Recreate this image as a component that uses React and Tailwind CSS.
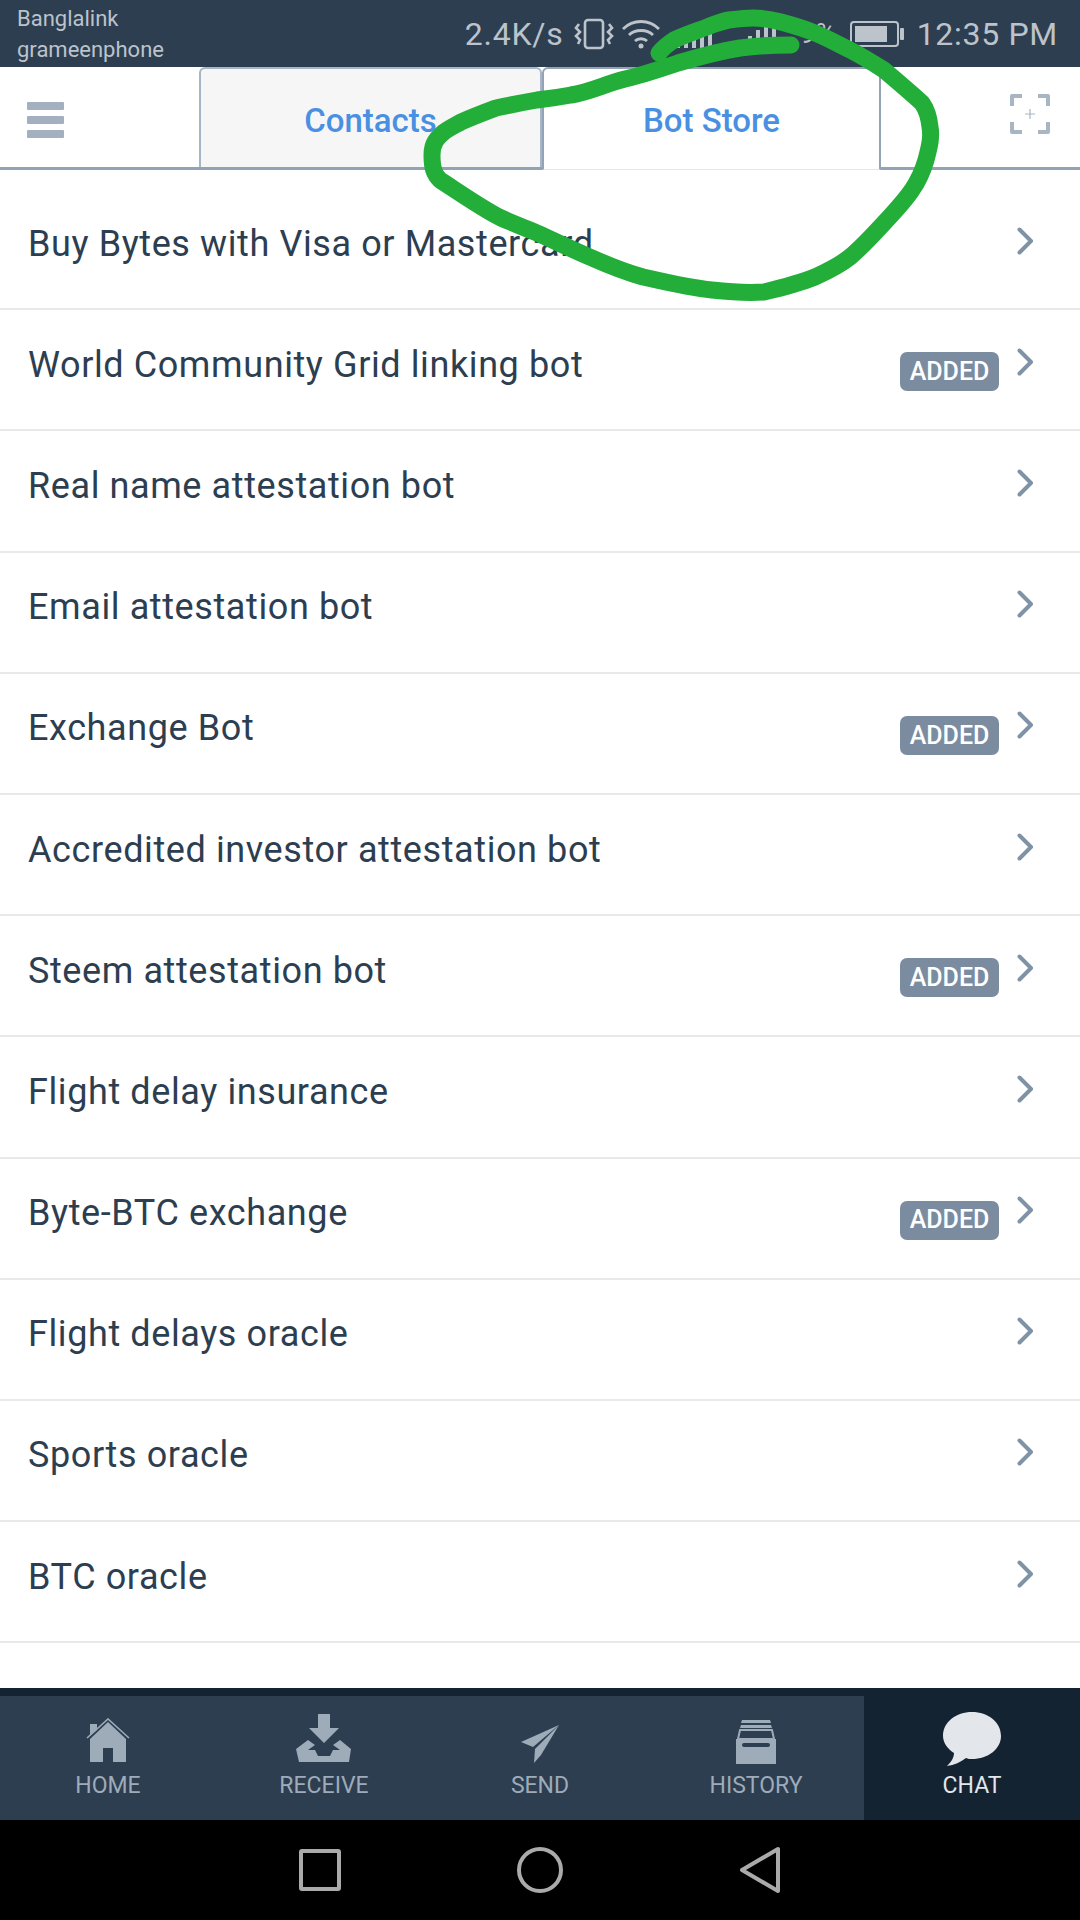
const rows = [
  ["Buy Bytes with Visa or Mastercard", false],
  ["World Community Grid linking bot", true],
  ["Real name attestation bot", false],
  ["Email attestation bot", false],
  ["Exchange Bot", true],
  ["Accredited investor attestation bot", false],
  ["Steem attestation bot", true],
  ["Flight delay insurance", false],
  ["Byte-BTC exchange", true],
  ["Flight delays oracle", false],
  ["Sports oracle", false],
  ["BTC oracle", false],
];

function HomeIcon() {
  return (
    <svg width="44" height="46" viewBox="0 0 44 46" fill="#9eabb8">
      <path d="M4 21 L22 4 L40 21 V44 H27 V30 H17 V44 H4 Z" />
      <path d="M1 20 L22 1 L43 20" fill="none" stroke="#9eabb8" strokeWidth="1.6" />
      <path d="M4 6 H11 V12 L4 18 Z" />
    </svg>
  );
}
function ReceiveIcon() {
  return (
    <svg width="58" height="50" viewBox="0 0 58 50" fill="#9eabb8">
      <path d="M23 0 H35 V14 H44 L29 29 L14 14 H23 Z" />
      <path d="M13 26 L20 31 L13 36 H20 L23 42 H35 L38 36 H45 L38 31 L45 26 L56 35 L54 48 H4 L1 35 Z" />
    </svg>
  );
}
function SendIcon() {
  return (
    <svg width="40" height="40" viewBox="0 0 40 40" fill="#9eabb8">
      <path d="M39 1 L1 18 L13 23 Z" />
      <path d="M39 1 L15 25 L14 39 L21 31 Z" />
    </svg>
  );
}
function HistoryIcon() {
  return (
    <svg width="40" height="44" viewBox="0 0 40 44" fill="#9eabb8">
      <path d="M6 0 H34 L35 3 H5 Z" />
      <path d="M5 5 H35 L36 8 H4 Z" />
      <path d="M2 19 L4 10 H36 L38 19 Z" fill="none" stroke="#9eabb8" strokeWidth="2" />
      <path d="M0 19 H40 V44 H0 Z M8 23 a2 2 0 0 0 0 4 H32 a2 2 0 0 0 0 -4 Z" fillRule="evenodd" />
    </svg>
  );
}
function ChatIcon() {
  return (
    <svg width="58" height="54" viewBox="0 0 58 54" fill="#e3e6ea">
      <path d="M29 0 C45 0 58 10 58 24 C58 37 45 47 29 47 C27 47 25 47 23 46 C18 50 11 53 4 54 C8 50 11 46 11 41 C5 37 0 31 0 24 C0 10 13 0 29 0 Z" />
    </svg>
  );
}

const tabs = [
  ["HOME", <HomeIcon />],
  ["RECEIVE", <ReceiveIcon />],
  ["SEND", <SendIcon />],
  ["HISTORY", <HistoryIcon />],
];

export default function App() {
  return (
    <div className="relative flex h-[1920px] w-[1080px] flex-col overflow-hidden bg-white font-['Roboto',sans-serif]">
      {/* Status bar */}
      <div className="flex h-[67px] shrink-0 items-center bg-[#2d3e50] pl-[17px] pr-[22px] text-[#bcc3cb]">
        <div className="flex flex-col text-[22px] leading-[31px]">
          <span>Banglalink</span>
          <span>grameenphone</span>
        </div>
        <div className="ml-auto flex items-center">
          <span className="mr-[10px] text-[32px] leading-none tracking-[0.8px]">2.4K/s</span>
          <svg width="40" height="32" viewBox="0 0 40 32" fill="none" stroke="#bcc3cb" strokeWidth="2.6" className="mr-[8px]">
            <rect x="11" y="2" width="18" height="28" rx="3" />
            <path d="M5 6 L2 10 L6 14 L2 18 L6 22 L4 26 M35 6 L38 10 L34 14 L38 18 L34 22 L36 26" />
          </svg>
          <svg width="38" height="32" viewBox="0 0 38 32" fill="none" stroke="#bcc3cb" strokeWidth="2.8" className="mr-[14px]">
            <path d="M1 11 C11 1 27 1 37 11" />
            <path d="M7 17 C13 11 25 11 31 17" />
            <path d="M13 23 C16 20 22 20 25 23" />
            <circle cx="19" cy="28" r="2.5" fill="#bcc3cb" stroke="none" />
          </svg>
          <svg width="40" height="32" viewBox="0 0 40 32" fill="#bcc3cb" className="mr-[34px]">
            <rect x="2" y="24" width="4" height="6" />
            <rect x="10" y="20" width="4" height="10" />
            <rect x="18" y="16" width="4" height="14" />
            <rect x="26" y="12" width="4" height="18" />
            <rect x="34" y="8" width="4" height="22" />
          </svg>
          <svg width="30" height="32" viewBox="0 0 30 32" fill="#bcc3cb" className="mr-[22px]">
            <rect x="0" y="18" width="4" height="12" />
            <rect x="8" y="12" width="4" height="18" />
            <rect x="16" y="6" width="4" height="24" />
            <rect x="24" y="6" width="4" height="24" />
          </svg>
          <span className="mr-[10px] w-[40px] text-[28px] leading-none">9%</span>
          <svg width="54" height="28" viewBox="0 0 54 28" className="mr-[13px]">
            <rect x="1" y="2" width="47" height="24" rx="3" fill="none" stroke="#bcc3cb" strokeWidth="2" />
            <rect x="5" y="6" width="32" height="16" fill="#bcc3cb" />
            <rect x="50" y="8" width="4" height="12" rx="1" fill="#bcc3cb" />
          </svg>
          <span className="text-[32px] leading-none tracking-[0.7px]">12:35 PM</span>
        </div>
      </div>

      {/* Header with tabs */}
      <div className="flex h-[103px] shrink-0 items-stretch border-b-[3px] border-[#93a3b5] bg-white">
        <div className="flex w-[199px] shrink-0 flex-col gap-[6px] pl-[27px] pt-[35px]">
          <div className="h-[8px] w-[37px] rounded-[1px] bg-[#a3b0bf]" />
          <div className="h-[8px] w-[37px] rounded-[1px] bg-[#a3b0bf]" />
          <div className="h-[8px] w-[37px] rounded-[1px] bg-[#a3b0bf]" />
        </div>
        <div className="flex w-[343px] shrink-0 items-center justify-center rounded-t-[6px] border-x-2 border-t-2 border-[#a5b6c9] bg-[#f6f6f6] pt-[5px] text-[33px] font-medium text-[#4a90e2]">
          Contacts
        </div>
        <div className="-mb-[3px] flex w-[339px] shrink-0 items-center justify-center rounded-t-[6px] border-x-2 border-t-2 border-b border-[#93a3b5] border-b-[#e3e6ea] bg-white pt-[4px] text-[33px] font-medium text-[#4a90e2]">
          Bot Store
        </div>
        <div className="flex flex-1 justify-end pr-[30px] pt-[27px]">
          <svg width="40" height="40" viewBox="0 0 40 40" fill="none" stroke="#a8b5c3" strokeWidth="4" strokeLinejoin="round">
            <path d="M2 12 V2 H12 M28 2 H38 V12 M2 28 V38 H12 M28 38 H38 V28" />
            <path d="M15 20 H25 M20 15 V25" strokeWidth="1.2" />
          </svg>
        </div>
      </div>

      {/* List */}
      <div className="flex min-h-0 flex-1 flex-col overflow-hidden pt-[19px]">
        {rows.map(([name, added]) => (
          <div key={name} className="flex h-[121.2px] shrink-0 items-center border-b-2 border-[#e9e9e9] pl-[28px] pr-[46px]">
            <span className="pb-[10px] text-[36px] font-normal tracking-[0.6px] text-[#2c3e50]">{name}</span>
            {added && (
              <span className="ml-auto mr-[1px] mt-[4px] flex h-[39px] w-[99px] items-center justify-center rounded-[7px] bg-[#7b8ca0] text-[25px] font-medium text-white">
                ADDED
              </span>
            )}
            <svg width="17" height="28" viewBox="0 0 17 28" fill="none" stroke="#7f92a6" strokeWidth="4" strokeLinecap="round" strokeLinejoin="round" className={added ? "mb-[16px] ml-[17px]" : "mb-[16px] ml-auto"}>
              <path d="M2.5 2.5 L14 14 L2.5 25.5" />
            </svg>
          </div>
        ))}
      </div>

      {/* Bottom tab bar */}
      <div className="flex h-[132px] shrink-0 bg-[#142332]">
        {tabs.map(([label, icon]) => (
          <div key={label} className="mt-[8px] flex w-[216px] flex-col items-center bg-[#2d3e50] pt-[6px]">
            <div className="flex h-[64px] items-end justify-center pb-[2px]">{icon}</div>
            <span className="mt-[6px] text-[23px] leading-[28px] text-[#9eabb8]">{label}</span>
          </div>
        ))}
        <div className="mt-[8px] flex w-[216px] flex-col items-center pt-[6px]">
          <div className="flex h-[64px] items-end justify-center">
            <ChatIcon />
          </div>
          <span className="mt-[6px] text-[23px] leading-[28px] text-[#e3e6ea]">CHAT</span>
        </div>
      </div>

      {/* Android navigation bar */}
      <div className="flex h-[100px] shrink-0 items-center justify-center bg-black">
        <div className="flex items-center gap-[176px]">
          <div className="h-[42px] w-[42px] rounded-[3px] border-[4px] border-[#aaaaaa]" />
          <div className="h-[46px] w-[46px] rounded-full border-[4px] border-[#aaaaaa]" />
          <svg width="42" height="48" viewBox="0 0 42 48" fill="none" stroke="#aaaaaa" strokeWidth="4" strokeLinejoin="round">
            <path d="M39 3 V45 L3 24 Z" />
          </svg>
        </div>
      </div>

      {/* Hand-drawn annotation */}
      <svg className="pointer-events-none absolute left-0 top-0" width="1080" height="400" viewBox="0 0 1080 400" fill="none">
        <path
          d="M791 45 C770 45 755 46 740 48 C715 52 695 58 678 63 C660 69 643 75 625 79 C605 84 590 92 571 95 C555 98 537 100 537 100 C520 103 510 105 496 108 C480 114 470 118 461 122 C452 127 448 129 444 132 C437 138 432 143 432 155 C432 168 434 174 440 180 C460 193 480 207 499 217 C512 223 525 228 537 233 C555 241 575 251 592 258 C610 266 625 272 643 277 C665 282 690 288 712 290 C730 292 750 293 764 292 C785 287 800 283 815 277 C828 271 840 265 850 257 C862 247 873 235 884 223 C894 212 904 202 912 190 C919 180 923 170 926 160 C929 148 932 138 930 127 C929 117 927 110 922 103 C910 92 897 81 884 70 C873 63 862 56 850 50 C838 44 827 38 815 33 C803 28 792 25 781 22 C770 19 762 18 753 18 C745 18 737 19 729 20 C723 21 718 23 712 25 C700 30 687 34 674 40 C668 44 663 48 659 53"
          stroke="#22ae39"
          strokeWidth="17"
          strokeLinecap="round"
          strokeLinejoin="round"
        />
      </svg>
    </div>
  );
}
